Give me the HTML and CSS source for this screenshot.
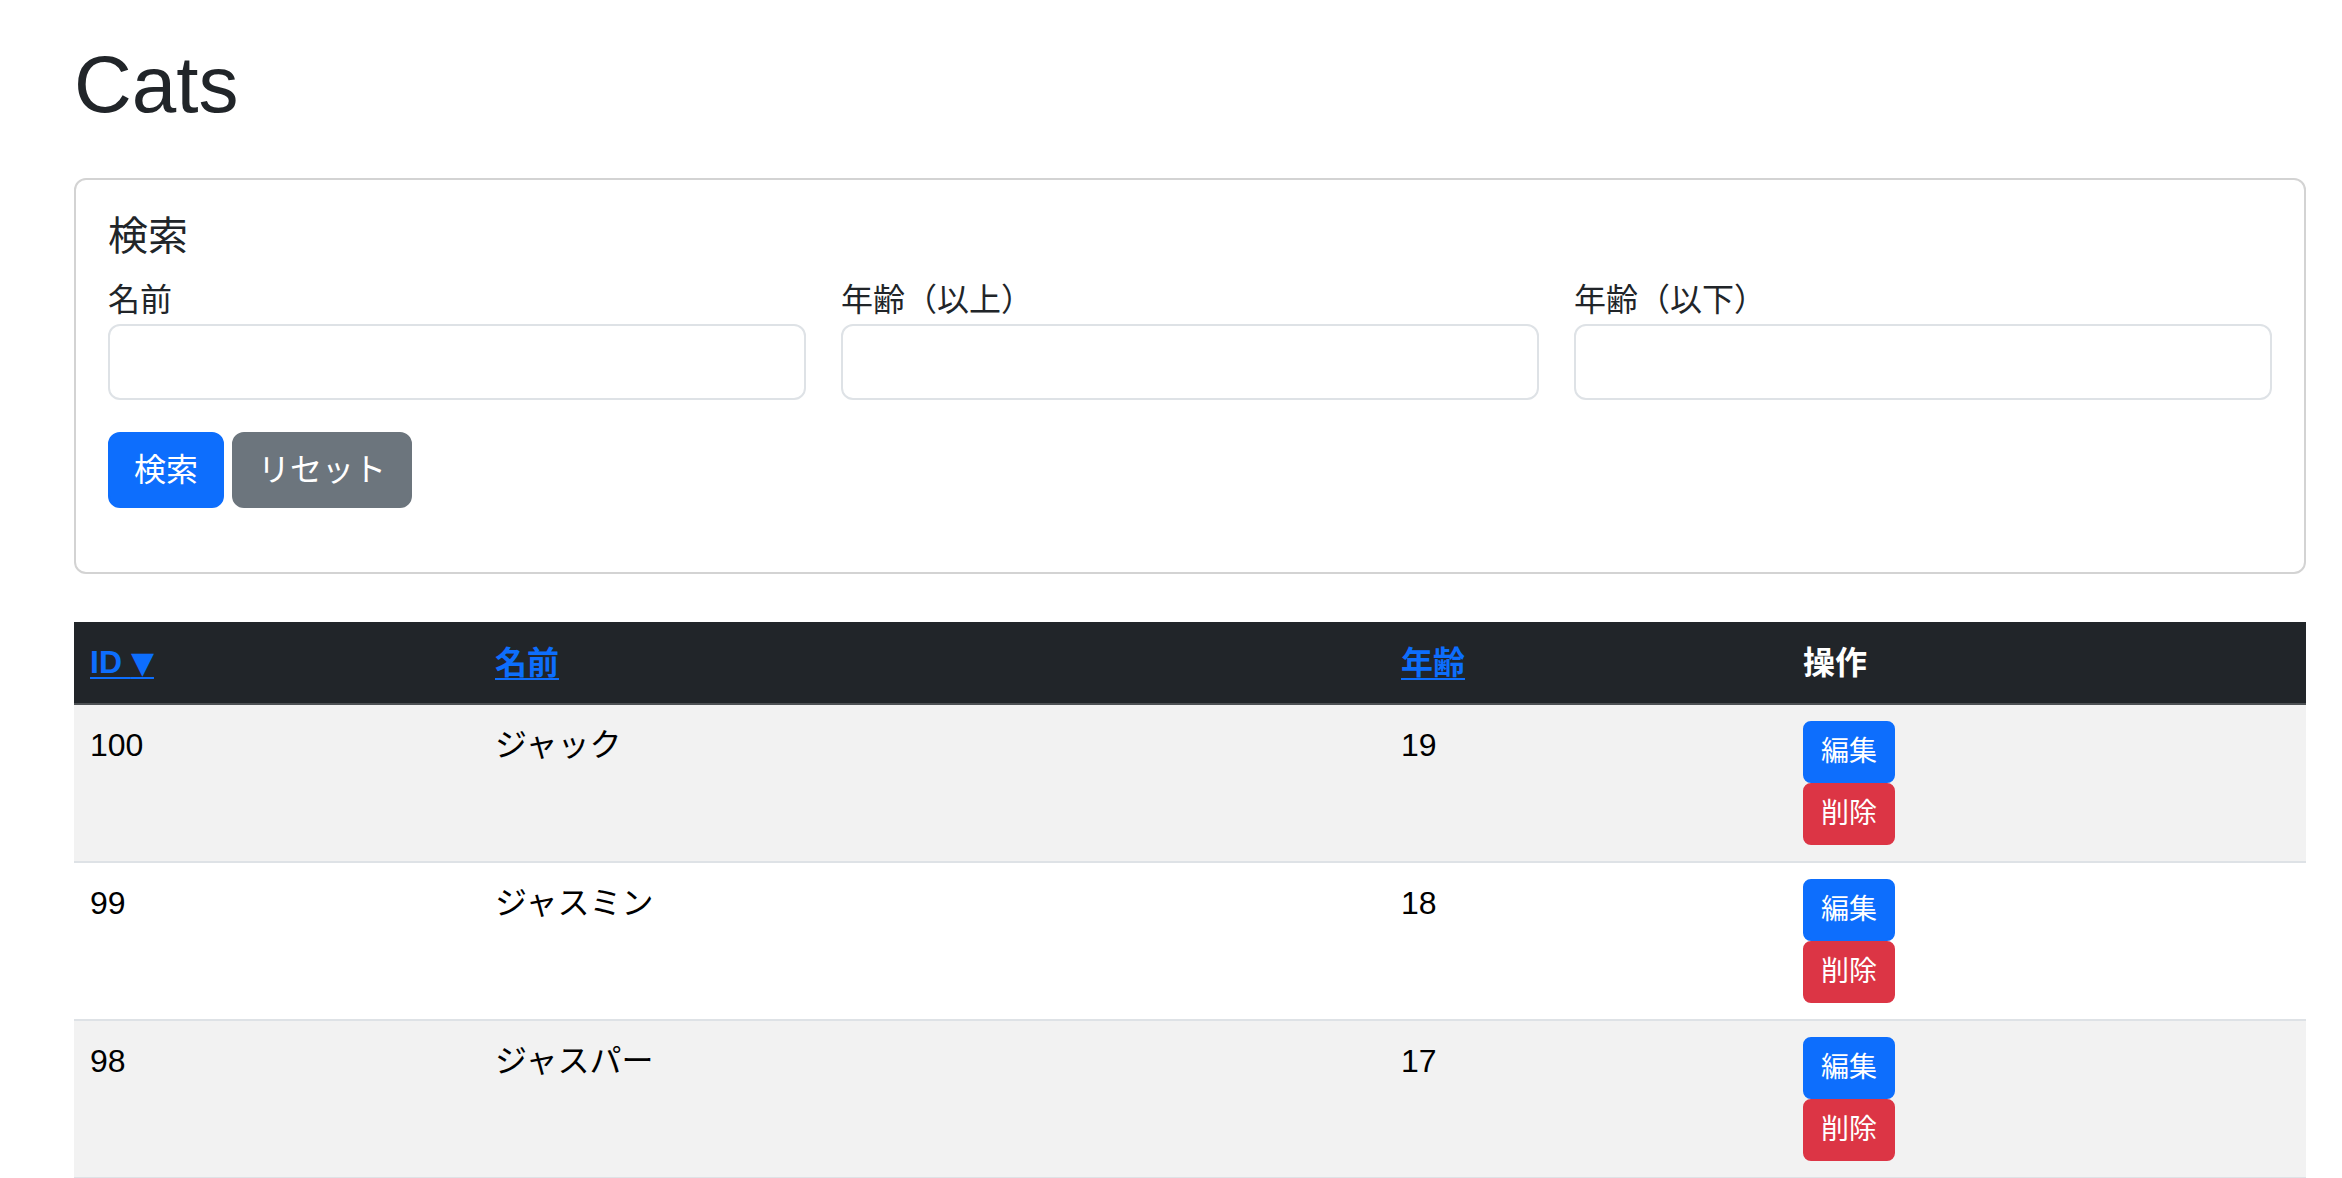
FILE: index.html
```html
<!DOCTYPE html>
<html lang="ja">
<head>
<meta charset="utf-8">
<title>Cats</title>
<link rel="stylesheet" href="styles.css">
</head>
<body>
<div class="page">
  <h1 class="title">Cats</h1>

  <div class="card">
    <h5 class="card-title">検索</h5>
    <form class="search">
      <div class="fields">
        <div class="field">
          <label class="label">名前</label>
          <input class="input" type="text">
        </div>
        <div class="field">
          <label class="label">年齢（以上）</label>
          <input class="input" type="text">
        </div>
        <div class="field">
          <label class="label">年齢（以下）</label>
          <input class="input" type="text">
        </div>
      </div>
      <div class="actions">
        <button type="button" class="btn btn-primary">検索</button>
        <button type="button" class="btn btn-secondary">リセット</button>
      </div>
    </form>
  </div>

  <table class="cats">
    <colgroup>
      <col class="col-id">
      <col class="col-name">
      <col class="col-age">
      <col class="col-ops">
    </colgroup>
    <thead>
      <tr>
        <th><a class="sort" href="#">ID <span class="arrow">▼</span></a></th>
        <th><a class="sort" href="#">名前</a></th>
        <th><a class="sort" href="#">年齢</a></th>
        <th>操作</th>
      </tr>
    </thead>
    <tbody>
      <tr class="odd">
        <td>100</td>
        <td>ジャック</td>
        <td>19</td>
        <td><div class="ops"><button type="button" class="btn-sm btn-primary">編集</button><button type="button" class="btn-sm btn-danger">削除</button></div></td>
      </tr>
      <tr>
        <td>99</td>
        <td>ジャスミン</td>
        <td>18</td>
        <td><div class="ops"><button type="button" class="btn-sm btn-primary">編集</button><button type="button" class="btn-sm btn-danger">削除</button></div></td>
      </tr>
      <tr class="odd">
        <td>98</td>
        <td>ジャスパー</td>
        <td>17</td>
        <td><div class="ops"><button type="button" class="btn-sm btn-primary">編集</button><button type="button" class="btn-sm btn-danger">削除</button></div></td>
      </tr>
    </tbody>
  </table>
</div>
</body>
</html>
```

FILE: styles.css
```css
* {
  box-sizing: border-box;
}

html, body {
  margin: 0;
  padding: 0;
  background: #fff;
}

body {
  font-family: "Liberation Sans", "Noto Sans CJK JP", sans-serif;
  font-size: 32px;
  line-height: 48px;
  color: #212529;
}

.page {
  width: 2306px;
  padding: 37px 0 0 74px;
}

.title {
  margin: 0 0 45px;
  font-size: 80px;
  line-height: 96px;
  font-weight: 400;
  color: #212529;
}

.card {
  border: 2px solid #d3d3d3;
  border-radius: 12px;
  padding: 32px;
  background: #fff;
}

.card-title {
  margin: 0 0 16px;
  font-size: 40px;
  line-height: 48px;
  font-weight: 400;
}

.search {
  margin: 0;
}

.fields {
  display: grid;
  grid-template-columns: repeat(3, 1fr);
  column-gap: 35px;
}

.field {
  display: flex;
  flex-direction: column;
}

.label {
  display: block;
  font-size: 32px;
  line-height: 48px;
}

.input {
  display: block;
  width: 100%;
  height: 76px;
  border: 2px solid #dee2e6;
  border-radius: 12px;
  background: #fff;
  padding: 12px 24px;
  font: inherit;
  outline: none;
}

.actions {
  display: flex;
  gap: 8px;
  margin: 32px 0 32px;
}

.btn {
  font-family: "Liberation Sans", "Noto Sans CJK JP", sans-serif;
  font-size: 32px;
  line-height: 48px;
  padding: 12px 24px;
  border: 2px solid transparent;
  border-radius: 12px;
  color: #fff;
  cursor: pointer;
}

.btn-sm {
  display: block;
  font-family: "Liberation Sans", "Noto Sans CJK JP", sans-serif;
  font-size: 28px;
  line-height: 42px;
  padding: 8px 16px;
  border: 2px solid transparent;
  border-radius: 8px;
  color: #fff;
  cursor: pointer;
}

.btn-primary {
  background: #0d6efd;
  border-color: #0d6efd;
}

.btn-secondary {
  background: #6c757d;
  border-color: #6c757d;
}

.btn-danger {
  background: #dc3545;
  border-color: #dc3545;
}

.cats {
  width: 2232px;
  margin-top: 48px;
  border-collapse: collapse;
  table-layout: fixed;
}

.col-id { width: 405px; }
.col-name { width: 906px; }
.col-age { width: 402px; }
.col-ops { width: 519px; }

.cats th {
  background: #212529;
  color: #fff;
  font-weight: 700;
  text-align: left;
  padding: 16px;
  line-height: 48px;
  border-bottom: 2px solid #4d5154;
}

.sort {
  color: #0d6efd;
  text-decoration: underline;
  text-decoration-thickness: 2px;
  text-underline-offset: 4px;
}

.arrow {
  font-family: "DejaVu Sans", sans-serif;
  font-size: 30px;
}

.cats td {
  padding: 16px;
  vertical-align: top;
  color: #000;
  border-bottom: 2px solid #dee2e6;
  background: #fff;
}

.cats tr.odd td {
  background: #f2f2f2;
}

.ops {
  display: flex;
  flex-direction: column;
  align-items: flex-start;
}
```
